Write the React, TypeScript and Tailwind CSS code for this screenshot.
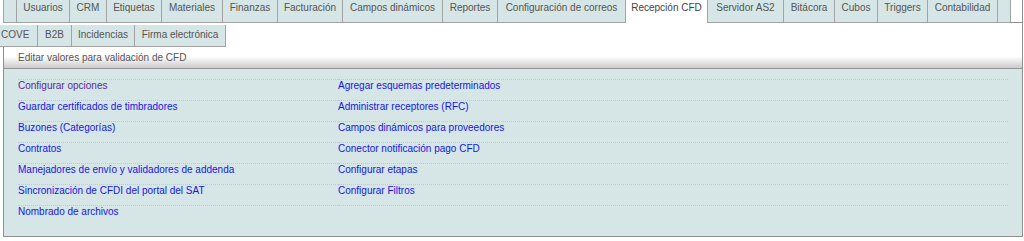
import React from "react";

const row1: [string, string][] = [
  ["Usuarios", "w-[53px]"],
  ["CRM", "w-[37px]"],
  ["Etiquetas", "w-[55px]"],
  ["Materiales", "w-[61px]"],
  ["Finanzas", "w-[55px]"],
  ["Facturación", "w-[65px]"],
  ["Campos dinámicos", "w-[100px]"],
  ["Reportes", "w-[55px]"],
  ["Configuración de correos", "w-[128px]"],
  ["Recepción CFD", "w-[82px]"],
  ["Servidor AS2", "w-[76px]"],
  ["Bitácora", "w-[51px]"],
  ["Cubos", "w-[43px]"],
  ["Triggers", "w-[50px]"],
  ["Contabilidad", "w-[70px]"],
];
const row2: [string, string][] = [
  ["B2B", "w-[34px]"],
  ["Incidencias", "w-[63px]"],
  ["Firma electrónica", "w-[91px]"],
];

const col1 = [
  "Configurar opciones",
  "Guardar certificados de timbradores",
  "Buzones (Categorías)",
  "Contratos",
  "Manejadores de envío y validadores de addenda",
  "Sincronización de CFDI del portal del SAT",
  "Nombrado de archivos",
];
const col2 = [
  "Agregar esquemas predeterminados",
  "Administrar receptores (RFC)",
  "Campos dinámicos para proveedores",
  "Conector notificación pago CFD",
  "Configurar etapas",
  "Configurar Filtros",
  "",
];

export default function App() {
  return (
    <div className="w-[1024px] h-[241px] bg-white font-['Liberation_Sans',Arial,sans-serif] text-[10px] leading-[11px] overflow-hidden">
      <div className="w-[1023px]">
        {/* Row 1 tabs */}
        <div className="flex h-[23px] pl-[3px]">
          <div className="w-[14px] h-[23px] bg-[#d6e5e5] border-l border-r border-b border-[#a3a3a3]" />
          {row1.map(([t, w]) => {
            const active = t === "Recepción CFD";
            return (
              <div
                key={t}
                className={
                  (active
                    ? "bg-white border-r border-[#a3a3a3] text-[#444] "
                    : "bg-[#d6e5e5] border-r border-b border-[#a3a3a3] text-[#555] ") +
                  "h-[23px] pt-[2px] text-center whitespace-nowrap shrink-0 " +
                  w
                }
              >
                {t}
              </div>
            );
          })}
          <div className="w-[13px] h-[23px] bg-[#d6e5e5] border-r border-b border-[#a3a3a3]" />
          <div className="flex-1 h-[23px] border-b border-r border-[#8f8f8f]" />
        </div>
        {/* Row 2 + panel */}
        <div className="border-r border-[#8f8f8f] h-[214px]">
          <div className="flex h-[24px] pt-[2px]">
            <div className="w-[38px] h-[22px] pl-[1px] pt-[4px] bg-[#d6e5e5] border-r border-b border-[#a3a3a3] text-[#555]">
              COVE
            </div>
            {row2.map(([t, w]) => (
              <div
                key={t}
                className={
                  "h-[22px] pt-[4px] text-center bg-[#d6e5e5] border-r border-b border-[#a3a3a3] text-[#555] whitespace-nowrap shrink-0 " +
                  w
                }
              >
                {t}
              </div>
            ))}
          </div>
          <div className="ml-[3px] border-l border-b border-[#8f8f8f] h-[190px] flex flex-col">
            <div className="h-[22px] pl-[14px] pt-[5px] bg-linear-to-b from-white from-45% to-[#cbcbcb] border-b border-[#959595] text-[#555]">
              Editar valores para validación de CFD
            </div>
            <div className="flex-1 bg-[#d6e5e5] px-[14px] pt-[10px]">
              <div className="grid grid-cols-[320px_1fr]">
                {col1.map((a, i) => (
                  <React.Fragment key={i}>
                    <div className="h-[21px] border-t border-dotted border-[#bccbcb]">
                      <a
                        href="#"
                        className={i === 0 ? "text-[#5a2a99]" : "text-[#1515e8]"}
                      >
                        {a}
                      </a>
                    </div>
                    <div className="h-[21px] border-t border-dotted border-[#bccbcb]">
                      {col2[i] && (
                        <a href="#" className="text-[#1515e8]">
                          {col2[i]}
                        </a>
                      )}
                    </div>
                  </React.Fragment>
                ))}
              </div>
            </div>
          </div>
        </div>
      </div>
    </div>
  );
}
